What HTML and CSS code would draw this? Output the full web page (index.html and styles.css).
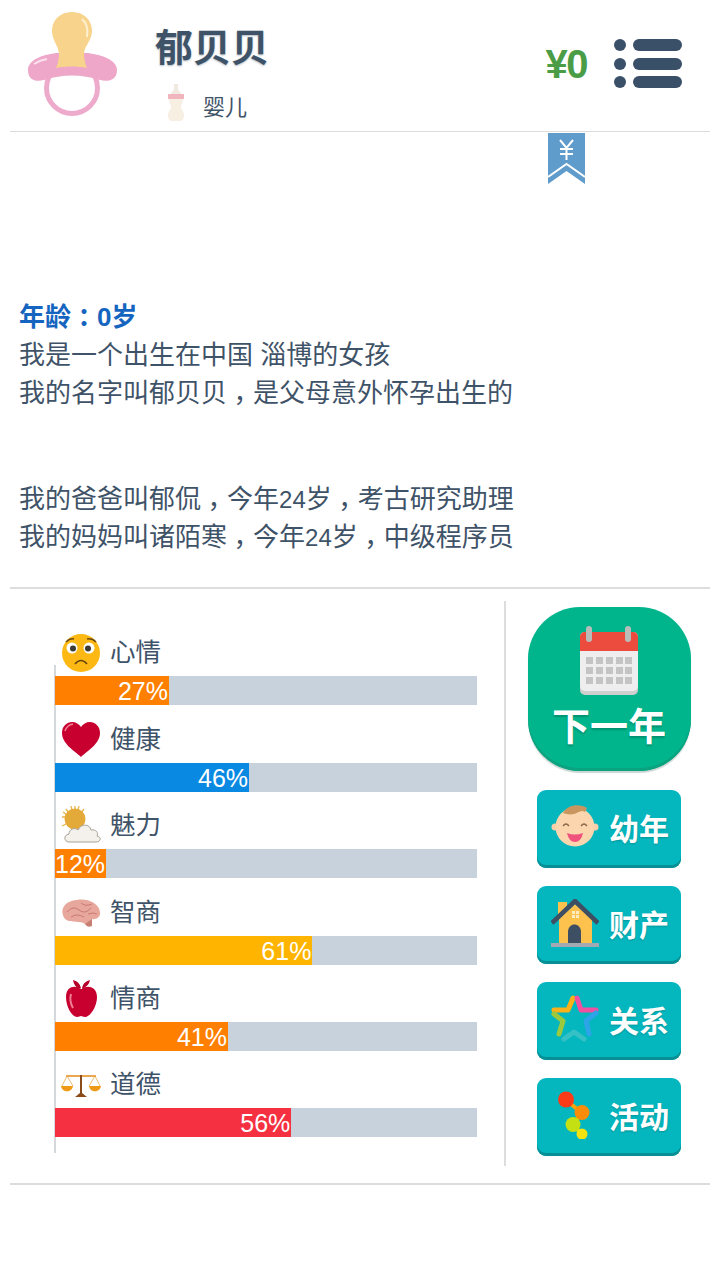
FILE: index.html
```html
<!DOCTYPE html>
<html>
<head lang="en">
    <meta charset="UTF-8">
    <title>郁贝贝</title>
    <link rel="stylesheet" href="styles.css">
</head>
<body>
<div class="header">
    <svg class="pacifier" viewBox="0 0 100 110">
        <circle cx="50" cy="78" r="25.500" fill="none" stroke="#eeaacb" stroke-width="5"/>
        <path d="M6 60C6 50 20 45 34 43H66C80 45 95 50 95 60C95 71 85 72 78 70C60 64 40 64 22 70C15 72 6 71 6 60Z" fill="#eea6c9"/>
        <path d="M12 54Q18 50 25 49" fill="none" stroke="#fbe3ee" stroke-width="2"/>
        <path d="M50 2C37 2 30 11 30 21C30 30 36 35 37 43C37 49 36 53 34 58C44 56 55 56 65 58C63 53 62 49 62 43C63 35 70 30 70 21C70 11 63 2 50 2Z" fill="#f8d38b"/>
        <path d="M60 9Q67 15 65 27" fill="none" stroke="#fdf0d0" stroke-width="2"/>
    </svg>
    <div class="who">
        <div class="name">郁贝贝</div>
        <div class="stage">
            <svg class="bottle" viewBox="0 0 22 38">
                <path d="M9 1H13V6C13 8 16 9 16 11H6C6 9 9 8 9 6Z" fill="#efe9e0"/>
                <rect x="3" y="11" width="16" height="5" fill="#f0b5bd"/>
                <path d="M4 16H18C18 20 16 21 16 24C16 27 19 28 19 32C19 36 17 38 15 38H7C5 38 3 36 3 32C3 28 6 27 6 24C6 21 4 20 4 16Z" fill="#f6efe2"/>
            </svg>
            <span>婴儿</span>
        </div>
    </div>
    <div class="money">¥0</div>
    <svg class="menu" viewBox="0 0 68 52">
        <circle cx="6" cy="7" r="6"/>
        <circle cx="6" cy="26" r="6"/>
        <circle cx="6" cy="44" r="6"/>
        <rect x="19" y="1" width="49" height="12" rx="6"/>
        <rect x="19" y="20" width="49" height="12" rx="6"/>
        <rect x="19" y="38" width="49" height="12" rx="6"/>
    </svg>
</div>

<div class="story">
    <div class="bookmark">
        <svg viewBox="0 0 37 51">
            <path d="M0 0H37V51L18.500 38L0 51Z" fill="#5f9bcb"/>
            <path d="M0 44L18.500 31L37 44" fill="none" stroke="#fff" stroke-width="2"/>
            <path d="M12 7L18.500 15L25 7M18.500 15V27M12 16H25M12 21H25" fill="none" stroke="#fff" stroke-width="2"/>
        </svg>
    </div>
    <p class="age">年龄<span class="mark">：</span>0岁</p>
    <p>我是一个出生在中国 淄博的女孩<br>我的名字叫郁贝贝<span class="mark">，</span>是父母意外怀孕出生的</p>
    <p class="parents">我的爸爸叫郁侃<span class="mark">，</span>今年<span class="num">24</span>岁<span class="mark">，</span>考古研究助理<br>我的妈妈叫诸陌寒<span class="mark">，</span>今年<span class="num">24</span>岁<span class="mark">，</span>中级程序员</p>
</div>

<div class="panel">
    <div class="stats">
        <div class="stat">
            <div class="stat-head">
                <svg class="stat-icon" viewBox="0 0 40 40">
                    <circle cx="20" cy="20" r="19" fill="#fdb813"/>
                    <circle cx="11" cy="15" r="5.500" fill="#fff"/>
                    <circle cx="28" cy="15" r="5.500" fill="#fff"/>
                    <circle cx="12" cy="15.500" r="3" fill="#3d3a35"/>
                    <circle cx="27" cy="15.500" r="3" fill="#3d3a35"/>
                    <path d="M5 9Q9 5 13 6M26 6Q31 5 35 9M14 31Q20 24 26 31" fill="none" stroke="#6b4a12" stroke-width="1.600"/>
                </svg>
                <span>心情</span>
            </div>
            <div class="bar"><div class="fill orange" style="width:27%">27%</div></div>
        </div>
        <div class="stat">
            <div class="stat-head">
                <svg class="stat-icon" viewBox="0 0 40 40">
                    <path d="M20 37C14 31 1 24 1 13C1 6 6 2 11 2C15 2 18 4 20 7C22 4 25 2 29 2C34 2 39 6 39 13C39 24 26 31 20 37Z" fill="#c8002f"/>
                    <path d="M4 11Q6 5 12 4" fill="none" stroke="#ef7f95" stroke-width="1.500"/>
                </svg>
                <span>健康</span>
            </div>
            <div class="bar"><div class="fill blue" style="width:46%">46%</div></div>
        </div>
        <div class="stat">
            <div class="stat-head">
                <svg class="stat-icon" viewBox="0 0 40 40">
                    <path d="M14 0V5M5 3L8 7M1 11H4M1 20L5 18M23 3L20 7M2 6L6 9M10 0L11 4M18 0L17 4" stroke="#e8b54a" stroke-width="1.300"/>
                    <circle cx="14" cy="13" r="10.500" fill="#e3aa3a"/>
                    <path d="M8 36C3 36 2 29 8 28C8 23 14 21 17 24C20 17 29 18 30 24C35 23 38 27 36 30C41 31 40 36 35 36Z" fill="#f4f1ec" stroke="#a8a296" stroke-width="1"/>
                </svg>
                <span>魅力</span>
            </div>
            <div class="bar"><div class="fill orange" style="width:12%">12%</div></div>
        </div>
        <div class="stat">
            <div class="stat-head">
                <svg class="stat-icon" viewBox="0 0 40 40">
                    <path d="M2 22C-1 14 7 7 16 7C26 5 38 10 39 19C40 24 35 27 31 26C31 31 27 33 24 31C20 28 16 30 10 28C6 28 3 26 2 22Z" fill="#e8a79c"/>
                    <path d="M6 19Q12 12 18 17T30 15M10 24Q16 20 23 24M20 10Q24 14 31 11M27 21Q32 19 36 21" fill="none" stroke="#c87a72" stroke-width="1"/>
                    <path d="M24 31Q26 35 31 33L31 26Z" fill="#c77f74"/>
                </svg>
                <span>智商</span>
            </div>
            <div class="bar"><div class="fill yellow" style="width:61%">61%</div></div>
        </div>
        <div class="stat">
            <div class="stat-head">
                <svg class="stat-icon" viewBox="0 0 40 40">
                    <path d="M19 10C15 6 5 7 5 18C5 28 11 38 16 38C18 38 19 37 20 37C21 37 22 38 24 38C29 38 36 28 36 18C36 7 25 6 21 10Z" fill="#c8002f"/>
                    <path d="M12 1Q18 2 20 9L19 10Q13 8 12 1ZM21 9Q22 3 29 1Q28 7 21 10Z" fill="#b5002a"/>
                    <path d="M10 15Q8 22 12 29" fill="none" stroke="#ef7f95" stroke-width="2"/>
                </svg>
                <span>情商</span>
            </div>
            <div class="bar"><div class="fill orange" style="width:41%">41%</div></div>
        </div>
        <div class="stat">
            <div class="stat-head">
                <svg class="stat-icon" viewBox="0 0 40 40">
                    <path d="M5 11H35" stroke="#e58a14" stroke-width="1.500"/>
                    <path d="M19 10H21V29H19Z" fill="#8a4a1a"/>
                    <path d="M14 32Q19 28 20 27Q21 28 26 32Z" fill="#8a4a1a"/>
                    <path d="M6 11L1 21M6 11L12 21M34 11L28 21M34 11L39 21" stroke="#e8a84c" stroke-width="0.800"/>
                    <path d="M0 21H12C11 28 1 28 0 21ZM28 21H40C39 28 29 28 28 21Z" fill="#ef9a16"/>
                </svg>
                <span>道德</span>
            </div>
            <div class="bar"><div class="fill red" style="width:56%">56%</div></div>
        </div>
    </div>

    <div class="actions">
        <div class="next-btn">
            <svg class="calendar" viewBox="0 0 58 70">
                <rect x="0" y="6" width="58" height="63" rx="5" fill="#cfcfcf"/>
                <rect x="0" y="6" width="58" height="59" rx="5" fill="#eeeeee"/>
                <path d="M0 25V11C0 8 2 6 5 6H53C56 6 58 8 58 11V25Z" fill="#ec4c3e"/>
                <rect x="6" y="0" width="6" height="16" rx="3" fill="#b9bcb9"/>
                <rect x="45" y="0" width="6" height="16" rx="3" fill="#b9bcb9"/>
                <g fill="#c4c4c4">
                    <rect x="6" y="31" width="7" height="7"/><rect x="16" y="31" width="7" height="7"/><rect x="26" y="31" width="7" height="7"/><rect x="36" y="31" width="7" height="7"/><rect x="45" y="31" width="7" height="7"/>
                    <rect x="6" y="41" width="7" height="7"/><rect x="16" y="41" width="7" height="7"/><rect x="26" y="41" width="7" height="7"/><rect x="36" y="41" width="7" height="7"/><rect x="45" y="41" width="7" height="7"/>
                    <rect x="6" y="51" width="7" height="7"/><rect x="16" y="51" width="7" height="7"/><rect x="26" y="51" width="7" height="7"/><rect x="36" y="51" width="7" height="7"/><rect x="45" y="51" width="7" height="7"/>
                </g>
            </svg>
            <span>下一年</span>
        </div>
        <div class="small-btn">
            <svg class="btn-icon" viewBox="0 0 48 48">
                <circle cx="4" cy="24" r="3.500" fill="#f8cfa8"/>
                <circle cx="44" cy="24" r="3.500" fill="#f8cfa8"/>
                <circle cx="24" cy="24" r="19.500" fill="#fbd5ae"/>
                <path d="M12 10C16 2 28 0 36 5L34 9C30 6 27 10 23 11C19 12 15 11 12 10Z" fill="#c99660"/>
                <path d="M12 23Q15 19 18 23M30 23Q33 19 36 23" fill="none" stroke="#8a6a4a" stroke-width="1.300"/>
                <path d="M16 30Q24 33 32 30Q30 39 24 39Q18 39 16 30Z" fill="#f0527e"/>
            </svg>
            <span>幼年</span>
        </div>
        <div class="small-btn">
            <svg class="btn-icon" viewBox="0 0 48 48">
                <rect x="7" y="3" width="9" height="14" fill="#fcc24d"/>
                <path d="M8 20L24 5L41 20V44H8Z" fill="#fcc24d"/>
                <path d="M1 24L24 2L47 24" fill="none" stroke="#3e4e63" stroke-width="4.500"/>
                <path d="M17 44V33C17 23 30 23 30 33V44Z" fill="#3e4e63"/>
                <path d="M21 12H24V15H21ZM25 12H28V15H25ZM21 16H24V19H21ZM25 16H28V19H25Z" fill="#fdecc0"/>
                <rect x="0" y="44" width="48" height="4" fill="#a2a9b3"/>
            </svg>
            <span>财产</span>
        </div>
        <div class="small-btn">
            <svg class="btn-icon" viewBox="0 0 48 48">
                <g fill="none" stroke-width="5" stroke-linejoin="round" stroke-linecap="round">
                    <path d="M3 15H17L22 3" stroke="#fbb117"/>
                    <path d="M26 3L30 15H45" stroke="#f14fa0"/>
                    <path d="M45 18L35 26L38 39" stroke="#2ea4e8"/>
                    <path d="M33 44L23 37L13 44" stroke="#35c0c5"/>
                    <path d="M3 19L12 26L8 39" stroke="#9ac93e"/>
                </g>
            </svg>
            <span>关系</span>
        </div>
        <div class="small-btn">
            <svg class="btn-icon" viewBox="0 0 48 48">
                <path d="M15 9L31 22" fill="none" stroke="#f7a20a" stroke-width="4"/>
                <path d="M31 22L22 33" fill="none" stroke="#d8c010" stroke-width="4"/>
                <path d="M22 33L31 44" fill="none" stroke="#d8e012" stroke-width="4"/>
                <circle cx="15" cy="8.500" r="8" fill="#fb3a18"/>
                <circle cx="31" cy="21.500" r="7.500" fill="#fb8c08"/>
                <circle cx="22" cy="33.500" r="7.500" fill="#c4e012"/>
                <circle cx="31" cy="43" r="5.500" fill="#f4e310"/>
            </svg>
            <span>活动</span>
        </div>
    </div>
</div>
</body>
</html>
```

FILE: styles.css
```css
* {
    margin: 0;
    padding: 0;
    box-sizing: border-box;
}

body {
    width: 720px;
    background: #fff;
    color: #3f5368;
    font-family: "Liberation Sans", "Noto Sans CJK SC", sans-serif;
}

.header {
    height: 132px;
    margin: 0 10px;
    padding: 10px 28px 0 12px;
    display: flex;
    align-items: flex-start;
    border-bottom: 1px solid #dcdcdc;
}

.pacifier {
    width: 100px;
    height: 110px;
    flex: none;
}

.who {
    margin-left: 33px;
    padding-top: 12px;
    flex: 1;
}

.name {
    font-size: 38px;
    line-height: 52px;
    font-weight: bold;
    color: #3f5368;
    text-shadow: 0 1px 2px rgba(63, 83, 104, 0.4);
}

.stage {
    margin-top: 9px;
    padding-left: 10px;
    display: flex;
    align-items: center;
    font-size: 22px;
}

.bottle {
    width: 22px;
    height: 38px;
    margin: 0 16px 6px 0;
}

.money {
    margin-top: 31px;
    font-size: 40px;
    line-height: 46px;
    font-weight: bold;
    color: #4a9d46;
    letter-spacing: -1.500px;
}

.menu {
    width: 68px;
    height: 52px;
    margin: 28px 0 0 27px;
    fill: #3a4f68;
}

.story {
    position: relative;
    height: 457px;
    margin: 0 10px;
    padding: 166px 9px 0;
    border-bottom: 2px solid #dddddd;
    font-size: 26px;
    line-height: 38px;
}

.bookmark {
    position: absolute;
    top: 1px;
    left: 538px;
    width: 37px;
    height: 51px;
}

.age {
    font-weight: bold;
    color: #1565c0;
}

.parents {
    margin-top: 68px;
}

.num {
    font-size: 24px;
    line-height: 1;
}

/* half width glyph with padding, so the comma and colon sit mid cell */
.mark {
    padding: 0 6.500px;
    font-feature-settings: "halt";
}

.panel {
    height: 596px;
    margin: 0 10px;
    padding: 12px 0 17px;
    display: flex;
    border-bottom: 2px solid #dddddd;
}

.stats {
    position: relative;
    width: 496px;
    padding: 32.400px 0 0 45px;
    border-right: 2px solid #dddddd;
}

.stats::before {
    content: "";
    position: absolute;
    left: 44px;
    top: 64px;
    width: 2px;
    height: 488px;
    background: #d5d8da;
}

.stat {
    width: 422px;
    height: 86.400px;
}

.stat-head {
    height: 43px;
    padding-left: 6px;
    display: flex;
    align-items: flex-start;
    font-size: 25.500px;
    line-height: 39px;
}

.stat-icon {
    width: 40px;
    height: 40px;
    margin-right: 9px;
}

.bar {
    position: relative;
    height: 29px;
    background: #c8d2dd;
}

.fill {
    height: 29px;
    padding-right: 1px;
    font-size: 25px;
    line-height: 30px;
    color: #fff;
    text-align: right;
    white-space: nowrap;
}

.orange {
    background: #ff8000;
}

.blue {
    background: #0a89e2;
}

.yellow {
    background: #ffb400;
}

.red {
    background: #f53141;
}

.actions {
    flex: 1;
    padding: 6px 0 0 2px;
    display: flex;
    flex-direction: column;
    align-items: center;
}

.next-btn {
    flex: none;
    width: 163px;
    height: 164px;
    margin-bottom: 19px;
    padding-top: 19px;
    display: flex;
    flex-direction: column;
    align-items: center;
    background: #00b58c;
    border-radius: 52px;
    box-shadow: inset 0 -3px 0 #0aa27f, 0 2px 1px #c9d6d2;
    color: #fff;
    font-size: 38px;
    line-height: 50px;
    font-weight: bold;
    text-shadow: 0 2px 2px rgba(0, 0, 0, 0.2);
}

.calendar {
    width: 58px;
    height: 70px;
    margin-bottom: 6px;
}

.small-btn {
    flex: none;
    width: 144px;
    height: 78px;
    margin-bottom: 18px;
    padding: 0 12px 4px 14px;
    display: flex;
    align-items: center;
    justify-content: space-between;
    background: #04b7be;
    border-radius: 9px;
    box-shadow: inset 0 -3px 0 #078f95;
    color: #fff;
    font-size: 30px;
    font-weight: bold;
    text-shadow: 0 1px 2px rgba(0, 0, 0, 0.2);
}

.btn-icon {
    width: 48px;
    height: 48px;
}
```
